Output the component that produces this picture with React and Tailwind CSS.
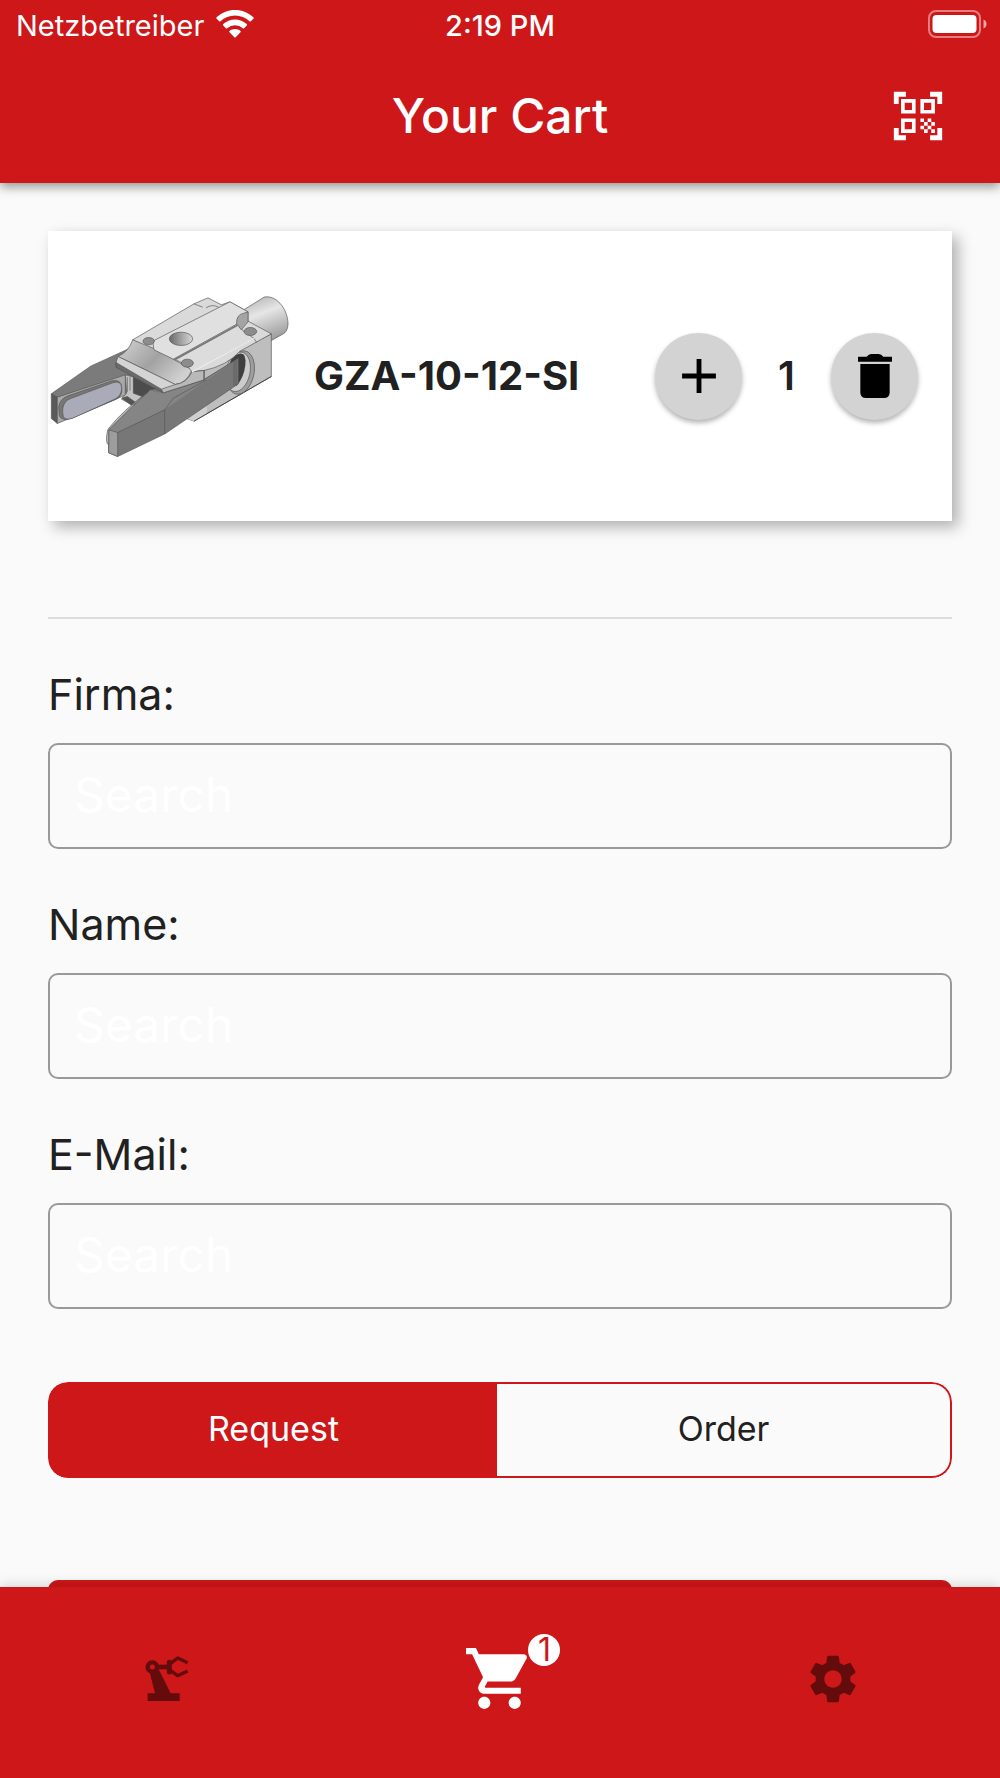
import React, { useState } from 'react'
import { MdAdd, MdQrCodeScanner, MdSettings, MdShoppingCart } from 'react-icons/md'

const FIELDS = [
  { id: 'company', label: 'Firma:', type: 'text' },
  { id: 'name', label: 'Name:', type: 'text' },
  { id: 'email', label: 'E-Mail:', type: 'email' },
]

const MODES = ['Request', 'Order']

export default function App() {
  const [quantity, setQuantity] = useState(1)
  const [mode, setMode] = useState('Request')

  return (
    <div className="flex h-screen flex-col overflow-hidden bg-[#fafafa] font-['Inter',sans-serif] text-[#212121]">
      <Header />

      <main className="min-h-0 flex-1 overflow-y-auto px-12 pt-12 pb-12 [scrollbar-width:none]">
        {quantity > 0 && (
          <CartItem
            name="GZA-10-12-SI"
            quantity={quantity}
            onAdd={() => setQuantity((q) => q + 1)}
            onRemove={() => setQuantity(0)}
          />
        )}

        <hr className="mt-24 border-t-2 border-[#dddddd]" />

        <form className="mt-12" onSubmit={(e) => e.preventDefault()}>
          {FIELDS.map((field) => (
            <Field key={field.id} {...field} />
          ))}
          <ModeSwitch value={mode} onChange={setMode} />
          <button
            type="submit"
            aria-label="Send"
            className="mt-[102px] block h-28 w-full rounded-[10px] bg-[#cd1719]"
          />
        </form>
      </main>

      <BottomNav count={quantity} />
    </div>
  )
}

function Header() {
  return (
    <header className="relative z-10 bg-[#cd1719] pb-[38px] text-white shadow-[0_4px_10px_rgba(0,0,0,0.4)]">
      <div className="grid grid-cols-3 items-center px-4 pt-2">
        <div className="flex items-center gap-3">
          <span className="text-[29px] leading-9">Netzbetreiber</span>
          <WifiIcon />
        </div>
        <span className="text-center text-[29px] leading-9 font-medium">2:19 PM</span>
        <BatteryIcon />
      </div>
      <div className="mt-[43px] grid grid-cols-[1fr_auto_1fr] items-center px-[53px]">
        <h1 className="col-start-2 text-5xl leading-[58px] font-medium">Your Cart</h1>
        <button type="button" aria-label="Scan code" className="justify-self-end">
          <MdQrCodeScanner size={58} />
        </button>
      </div>
    </header>
  )
}

function CartItem({ name, quantity, onAdd, onRemove }) {
  return (
    <section className="flex h-[290px] items-center bg-white pr-[34px] shadow-[6px_6px_14px_rgba(0,0,0,0.3)]">
      <GripperDrawing />
      <h2 className="ml-6 flex-1 text-[40px] font-bold">{name}</h2>
      <RoundButton label="Add one" onClick={onAdd}>
        <MdAdd size={58} />
      </RoundButton>
      <span className="w-[89px] text-center text-[40px] font-semibold">{quantity}</span>
      <RoundButton label="Remove" onClick={onRemove}>
        <TrashIcon />
      </RoundButton>
    </section>
  )
}

function RoundButton({ label, onClick, children }) {
  return (
    <button
      type="button"
      aria-label={label}
      onClick={onClick}
      className="flex size-[87px] items-center justify-center rounded-full bg-[#d3d3d3] text-black shadow-[0_3px_5px_rgba(0,0,0,0.3)]"
    >
      {children}
    </button>
  )
}

function Field({ id, label, type }) {
  return (
    <div className="mb-12">
      <label htmlFor={id} className="block text-[43px] leading-[54px]">
        {label}
      </label>
      <input
        id={id}
        type={type}
        placeholder="Search"
        className="mt-[22px] block h-[106px] w-full rounded-[10px] border-2 border-[#999999] px-6 pb-1 text-5xl placeholder:text-white"
      />
    </div>
  )
}

function ModeSwitch({ value, onChange }) {
  return (
    <div className="mt-[73px] grid h-24 grid-cols-[449fr_455fr] overflow-hidden rounded-[20px]">
      {MODES.map((mode) => (
        <button
          key={mode}
          type="button"
          aria-pressed={value === mode}
          onClick={() => onChange(mode)}
          className={`border-2 border-[#cd1719] pb-1 text-[34px] first:rounded-l-[20px] first:border-r-0 last:rounded-r-[20px] last:border-l-0 ${
            value === mode ? 'bg-[#cd1719] text-white' : 'text-[#212121]'
          }`}
        >
          {mode}
        </button>
      ))}
    </div>
  )
}

function BottomNav({ count }) {
  return (
    <nav className="relative z-10 grid h-[191px] grid-cols-3 items-center justify-items-center bg-[#cd1719] pb-2 text-[#640b0c] shadow-[0_-2px_12px_rgba(0,0,0,0.15)]">
      <a href="#products" aria-label="Products">
        <RobotArmIcon />
      </a>
      <a href="#cart" aria-label="Cart" className="relative text-white">
        <MdShoppingCart size={73} />
        {count > 0 && (
          <span className="absolute -top-2 -right-6 flex size-8 items-center justify-center rounded-full bg-white text-[32px] leading-8 text-[#cd1719]">
            {count}
          </span>
        )}
      </a>
      <a href="#settings" aria-label="Settings">
        <MdSettings size={58} />
      </a>
    </nav>
  )
}

function WifiIcon() {
  return (
    <svg className="mb-1" width="38" height="28" viewBox="0 0 38 28" fill="currentColor" aria-hidden="true">
      <path d="M19 0C26 0 32.500 2.700 37.400 7.300Q38 8 37.400 8.700L34.800 11.300Q34.200 11.900 33.500 11.300A21 21 0 0 0 4.500 11.300Q3.800 11.900 3.200 11.300L0.600 8.700Q0 8 0.600 7.300C5.500 2.700 12 0 19 0Z" />
      <path d="M19 9.500C23.500 9.500 27.600 11.200 30.800 14.100Q31.500 14.800 30.800 15.500L28.100 18.200Q27.500 18.800 26.800 18.200A12 12 0 0 0 11.200 18.200Q10.500 18.800 9.900 18.200L7.200 15.500Q6.500 14.800 7.200 14.100C10.400 11.200 14.500 9.500 19 9.500Z" />
      <path d="M19 19C21.100 19 23 19.700 24.500 20.900Q25.200 21.600 24.500 22.300L19.700 27.200Q19 27.900 18.300 27.200L13.500 22.300Q12.800 21.600 13.500 20.900C15 19.700 16.900 19 19 19Z" />
    </svg>
  )
}

function BatteryIcon() {
  return (
    <svg className="-mr-1 mb-1 justify-self-end" width="60" height="28" viewBox="0 0 60 28" aria-hidden="true">
      <rect x="1" y="1" width="51" height="26" rx="7" fill="none" stroke="white" strokeOpacity="0.45" strokeWidth="2" />
      <rect x="4.500" y="5" width="44" height="18" rx="4" fill="white" />
      <path d="M55.500 9.500C59.500 11 59.500 17 55.500 18.500Z" fill="white" fillOpacity="0.6" />
    </svg>
  )
}

function TrashIcon() {
  return (
    <svg width="34" height="44" viewBox="0 0 102 132" fill="currentColor" aria-hidden="true">
      <path d="M0 8H26Q32 0 40 0H62Q70 0 76 8H102V23H0Z" />
      <path d="M7 30H95V116Q94 132 78 132H24Q8 132 7 116Z" />
    </svg>
  )
}

function RobotArmIcon() {
  return (
    <svg width="44" height="46" viewBox="0 0 132 138" fill="none" stroke="currentColor" aria-hidden="true">
      <circle cx="22" cy="33" r="14" strokeWidth="13" />
      <path d="M14 48L30 112H8V135H104V112H77L42 42Z" fill="currentColor" stroke="none" />
      <path d="M40 33H72" strokeWidth="14" />
      <path d="M73 19V48" strokeWidth="15" strokeLinecap="round" />
      <path d="M76 23L98 6L128 20M76 43L98 59L128 45" strokeWidth="10" strokeLinejoin="round" />
    </svg>
  )
}

function GripperDrawing() {
  return (
    <svg
      width="242"
      height="167"
      viewBox="24 70 726 500"
      stroke="#555"
      strokeWidth="2"
      strokeLinejoin="round"
      role="img"
      aria-label="Gripper"
    >
      <defs>
        <linearGradient id="rod" x1="0.200" y1="0" x2="0.600" y2="1">
          <stop offset="0" stopColor="#b4b4b4" />
          <stop offset="0.400" stopColor="#e6e6e6" />
          <stop offset="1" stopColor="#9c9c9c" />
        </linearGradient>
        <linearGradient id="saddle" x1="0" y1="0" x2="1" y2="0.600">
          <stop offset="0" stopColor="#d4d4d4" />
          <stop offset="0.550" stopColor="#a2a2a2" />
          <stop offset="1" stopColor="#d0d0d0" />
        </linearGradient>
        <linearGradient id="bore" x1="0" y1="0" x2="1" y2="0">
          <stop offset="0" stopColor="#6a6a6a" />
          <stop offset="1" stopColor="#d8d8d8" />
        </linearGradient>
      </defs>

      {/* rod */}
      <path d="M608 122L672 82C705 74 742 112 744 160C744 178 738 188 728 193L694 212L622 156Z" fill="url(#rod)" />

      {/* rear jaw */}
      <path d="M34 372L152 289L270 235L330 330L256 372L52 382Z" fill="#7b7b7b" />
      <path d="M34 372L52 382V461L34 446Z" fill="#5a5a5a" />
      <path d="M52 382L256 315V376L52 461Z" fill="#a9a9a9" />
      <path d="M56 412Q58 388 84 378L216 333Q244 328 245 352V366Q242 384 222 391L96 445Q66 455 58 438Z" fill="#777" />
      <path d="M68 418Q70 394 92 386L218 339Q245 330 245 356Q244 380 222 389L98 445Q68 456 68 428Z" fill="#a9abb8" />

      {/* parts between the jaws */}
      <path d="M256 315L282 322V365L328 372L284 408L244 388L260 370Z" fill="#c4c4c4" />
      <path d="M262 322V366M270 322V362" fill="none" />
      <path d="M280 322L352 352L322 386L280 370Z" fill="#4c4c4c" />
      <path d="M246 385L276 408L290 400L262 380Z" fill="#555" />

      {/* body side */}
      <path d="M492 302L560 262L694 192V320L462 454L440 446L470 400Z" fill="#bebebe" />
      <path d="M440 446L500 400V432L462 454Z" fill="#cfcfcf" stroke="none" />
      <path d="M694 320L462 454" fill="none" stroke="#444" strokeWidth="3" />
      <ellipse cx="602" cy="308" rx="40" ry="66" transform="rotate(12 602 308)" fill="#9e9e9e" />
      <ellipse cx="594" cy="306" rx="36" ry="60" transform="rotate(12 594 306)" fill="#cccccc" />
      <path d="M576 262Q622 232 616 286Q612 322 590 348L550 330Z" fill="#3f3f3f" stroke="none" />

      {/* front jaw */}
      <path d="M595 265V342L375 492L233 560L206 549V480L330 360L490 330Z" fill="#777" />
      <path d="M206 480L330 362L368 370L492 332L560 290L374 420L233 488Z" fill="#858585" stroke="none" />
      <path d="M206 480L233 488V560L206 549Z" fill="#9d9d9d" />
      <path d="M233 488L374 420L400 385L500 330M374 420V492" fill="none" />
      <path d="M206 480L300 386L325 366Q250 420 204 478Q196 508 202 522L206 524Z" fill="#bdbdbd" />
      <path d="M582 274V348M588 270V346" fill="none" />

      {/* body top */}
      <path d="M278 210L462 102L504 84L544 105L570 96L624 126V154L694 192L600 244Q560 288 492 302L456 306L338 240Z" fill="#dadada" />
      <path d="M278 210L342 236L400 268L456 300Q438 342 406 344L234 260Q266 246 278 210Z" fill="url(#saddle)" />
      <path d="M234 260L406 344Q440 340 456 306L492 302V330L370 369L228 292V278Z" fill="#d4d4d4" />
      <path d="M228 278L364 358L370 369L228 292Z" fill="#6b6b6b" />
      <path d="M364 358L406 344Q440 340 456 306L492 302V330L370 369Z" fill="#b9b9b9" />
      <path d="M400 268L592 160L606 180L642 206L456 306Q440 280 400 268Z" fill="#dcdcdc" />
      <path d="M338 214L570 96L624 126L592 148V162L400 268L342 240Z" fill="#e0e0e0" />
      <path d="M404 270L592 166" fill="none" stroke="#777" strokeWidth="5" />
      <path d="M462 102L488 112M498 114Q516 102 536 112" fill="none" />
      <path d="M590 162Q588 134 612 130L624 126V156L604 180Z" fill="#a4a4a4" />
      <path d="M642 206L650 218M492 302V330" fill="none" />
      <path d="M456 306L642 206" fill="none" stroke="#f2f2f2" strokeWidth="4" />

      {/* screw holes */}
      <ellipse cx="423" cy="207" rx="35" ry="20" fill="url(#bore)" />
      <ellipse cx="326" cy="214" rx="17" ry="11" fill="#8c8c8c" />
      <ellipse cx="442" cy="280" rx="18" ry="12" fill="#8c8c8c" />
      <ellipse cx="631" cy="185" rx="19" ry="12" fill="#8c8c8c" />
    </svg>
  )
}
